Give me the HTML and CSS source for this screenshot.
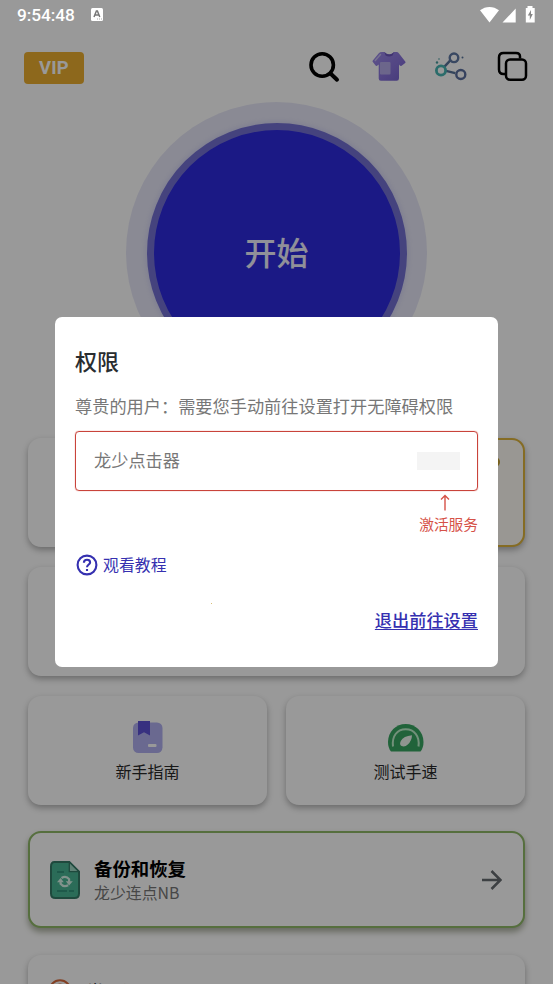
FILE: index.html
```html
<!DOCTYPE html>
<html lang="zh-CN">
<head>
<meta charset="UTF-8">
<title>龙少点击器</title>
<link rel="stylesheet" href="styles.css">
</head>
<body>
<header class="status">
  <span class="clock">9:54:48</span>
  <svg class="input-icon" width="12" height="13" viewBox="0 0 12 13"><rect width="12" height="13" rx="1.5" fill="#fff"/><path d="M3 9 5.4 3h1L8.8 9M4 7h4" fill="none" stroke="#777" stroke-width="1.5"/><path d="M6 11h5" stroke="#aaa" stroke-dasharray="1 1"/></svg>
  <svg class="signals" width="56" height="18" viewBox="0 0 56 18"><path d="M0 4.3C5.6-.2 13.4-.2 19 4.3L9.5 16.5ZM35.7 2.5V16.5H22.5Z" fill="#fff"/><path d="M47.5 0h5v2h2.2v14.4H45.8V2h1.7z" fill="#fff"/><path d="m51 4-3.2 5.5h2v4.5l3-6h-1.8z" fill="#888"/></svg>
</header>
<main class="app">
  <nav class="toolbar">
    <span class="vip">VIP</span>
    <div class="tools">
      <svg width="32" height="32" viewBox="0 0 32 32" fill="none" stroke="#000"><circle cx="14.2" cy="14" r="11.2" stroke-width="3.6"/><path d="m22.5 22.5 6.5 6.2" stroke-width="4" stroke-linecap="round"/></svg>
      <svg class="shirt" width="34" height="32" viewBox="0 0 34 32"><defs><linearGradient id="shirt" x1="0" y1="0" x2="1" y2="1"><stop stop-color="#9c8be8"/><stop offset=".55" stop-color="#8a75dc"/><stop offset="1" stop-color="#7461cc"/></linearGradient></defs><path d="M10 1h2.3q4.9 4.6 9.8 0h2.4q1.5 0 2.5 1.4l6.2 8q.8.9 0 1.7l-3.6 2.7q-1 .6-1.8-.2L27 13.5v13.8q0 2.5-2.4 2.5H8.9q-2.2 0-2.2-2.3V13.5l-1.6 1.2q-.8.6-1.5-.1L.8 11.1q-.7-.8 0-1.7l6-7.2Q7.8 1 10 1Z" fill="url(#shirt)"/><path d="M12.3 1q4.9 5 9.8 0l-1.5 3.4q-3.5 2.1-7 0Z" fill="#6b56bb"/><rect x="8" y="11" width="10.5" height="12.5" rx="1" fill="#b5abe8"/><path d="M3.3 9.4 8.5 3.5" stroke="#c6bdf0" stroke-width="1.5" stroke-linecap="round"/></svg>
      <svg width="34" height="32" viewBox="0 0 34 32" fill="none" stroke-width="2.4"><path d="m9.8 16.4 7.2-7.8M11 19.6l10.2 2.6" stroke="#58739a"/><circle cx="20" cy="6.8" r="4.3" stroke="#6079a4"/><circle cx="26.8" cy="23.5" r="4.5" stroke="#5b6f9e"/><circle cx="7" cy="19.5" r="4.6" stroke="#48b5b2" stroke-width="2.8"/><g stroke="none"><circle cx="3" cy="11.5" r="1.2" fill="#489b9d"/><circle cx="5" cy="8" r=".8" fill="#489b9d"/><circle cx="28.5" cy="6.5" r="1" fill="#56749b"/></g></svg>
      <svg width="32" height="32" viewBox="0 0 32 32" fill="none" stroke="#000" stroke-width="2.5"><path d="M8.5 23H6.5Q2 23 2 18.5V6.5Q2 2 6.5 2h12.5Q23 2 23 5.5v2"/><rect x="9" y="8.5" width="20" height="20.2" rx="4"/></svg>
    </div>
  </nav>
  <div class="start"><div class="start-core"><span>开始</span></div></div>
  <section class="cards">
    <div class="card"></div>
    <div class="card premium"></div>
    <div class="card wide"></div>
    <div class="card">
      <svg width="30" height="33" viewBox="0 0 30 33"><rect y="1.5" width="29.5" height="30.5" rx="5.5" fill="#b1b0f0"/><path d="M5 0h12v14.5l-6-3.2-6 3.2z" fill="#5d50d6"/><rect x="15" y="23" width="8.5" height="3" rx="1" fill="#fff"/></svg>
      <span>新手指南</span>
    </div>
    <div class="card">
      <svg width="36" height="28" viewBox="0 0 36 28"><path d="M3 27.5Q0 24 0 18C0 7.5 8 0 17.7 0s17.8 7.5 17.8 18q0 6-3 9.5z" fill="#38a661"/><path d="M5 22.5C3.7 12.3 9 5.2 17.7 5.2s14.2 7.1 12.8 17.3" fill="none" stroke="#bff0cc" stroke-width="2"/><path d="M24 11.2Q15.5 12 12.8 17q-1.8 3.5.8 5 3.4 1.3 6.2-1.6Q23.8 17 24 11.2Z" fill="#eef9f0"/></svg>
      <span>测试手速</span>
    </div>
  </section>
  <section class="row backup">
    <svg width="30" height="38" viewBox="0 0 30 38"><path d="M4.5 1h14.8l9.7 9.7v21.8q0 4.5-4.5 4.5h-19Q1 37 1 32.5v-27Q1 1 4.5 1Z" fill="#48b593" stroke="#347a67" stroke-width="2"/><path d="M19.3 1v9.7H29z" fill="#9dd8c3" stroke="#347a67" stroke-width="1.3"/><path d="M7 11h7M7 30h10m2 0h5" stroke="#32947c" stroke-width="2"/><g fill="none" stroke="#d7f5ea" stroke-width="2.2"><path d="M11.5 17q4.5-2.8 7.6 1.2v3M18.2 24.2q-4.6 2.4-7.6-1.4v-3"/></g><path d="M7 21.2l3.6-4.2 3.2 4.2zM15.8 20.2l3.3 4.2 3.7-4.2z" fill="#d7f5ea"/></svg>
    <div class="row-text"><strong>备份和恢复</strong><span>龙少连点NB</span></div>
    <svg class="next" width="20" height="20" viewBox="0 0 20 20"><path d="M0 10h18M9.5 1l9 9-9 9" fill="none" stroke="#666b70" stroke-width="2.5"/></svg>
  </section>
  <section class="row help">
    <svg width="24" height="24" viewBox="0 0 24 24" fill="none" stroke="#d96c3d" stroke-width="2"><circle cx="12" cy="12" r="10.7"/><path d="M8.5 9q0-3.5 3.5-3.5T15.5 9q0 2-3.5 4v2"/></svg>
    <span>常见问题</span>
  </section>
</main>
<div class="overlay">
  <section class="dialog">
    <h1>权限</h1>
    <p>尊贵的用户：需要您手动前往设置打开无障碍权限</p>
    <div class="service"><span>龙少点击器</span><i class="toggle"></i></div>
    <div class="hint">
      <svg width="10" height="17" viewBox="0 0 10 17"><path d="M5 16.5V1.5M1 5.5l4-4 4 4" fill="none" stroke="#d65248" stroke-width="1.4"/></svg>
      <span>激活服务</span>
    </div>
    <div class="tutorial">
      <svg width="22" height="22" viewBox="0 0 22 22" fill="none" stroke="#3530b0" stroke-width="2.1"><circle cx="11" cy="11" r="9.4"/><path d="M7.9 8.8q0-3.1 3.1-3.1t3.1 2.8c0 1.9-3.1 2.2-3.1 4.8M11 15v2"/></svg>
      <span>观看教程</span>
    </div>
    <div class="speck"></div>
    <a class="settings">退出前往设置</a>
  </section>
</div>
</body>
</html>
```
FILE: styles.css
```css
* { box-sizing: border-box; }
html, body { margin: 0; height: 984px; overflow: hidden; }
body { position: relative; background: #fff; font-family: Roboto, "Noto Sans CJK SC", sans-serif; }
svg { display: block; flex: none; }
.status { position: absolute; z-index: 3; top: 0; left: 0; width: 100%; height: 32px; padding-left: 17px; display: flex; align-items: flex-start; color: #fff; }
.clock { width: 74px; margin-top: 5px; font-size: 17.3px; line-height: 20px; font-weight: 500; letter-spacing: -.05px; }
.input-icon { margin-top: 8px; }
.signals { margin: 6px 17px 0 auto; }
.app { height: 984px; padding: 50px 28px 0; overflow: hidden; }
.toolbar { height: 32px; display: flex; align-items: center; justify-content: space-between; margin: 0 -4px; }
.vip { width: 60px; height: 32px; border-radius: 4px; background: #ecae2f; color: #fff; text-align: center; font-size: 18.4px; line-height: 32px; font-weight: 700; letter-spacing: .2px; margin-top: 3px; }
.tools { display: flex; gap: 30px; margin-top: 1px; }
.tools .shirt { margin: 0 -2px 0 2px; }
.tools svg:last-child { margin-left: -1px; }
.start { width: 301px; height: 301px; margin: 20px auto 0; border-radius: 50%; background: #e7e7f7; padding: 20.5px; }
.start-core { width: 260px; height: 260px; border: 7px solid #7471d2; border-radius: 50%; background: #2d2ade; box-shadow: 0 0 7px #c8c8f0; color: #f0f0ff; display: flex; align-items: center; justify-content: center; font-size: 32px; font-weight: 500; }
.start-core span { margin-bottom: 4px; }
.cards { display: grid; grid-template-columns: 1fr 1fr; grid-auto-rows: 109px; gap: 20px 19px; margin-top: 35px; }
.card { background: #fff; border-radius: 13px; box-shadow: 0 3px 6px rgba(0,0,0,.3); display: flex; flex-direction: column; align-items: center; padding-top: 25px; font-size: 16px; line-height: 24px; color: #292929; }
.card span { margin-top: auto; margin-bottom: 20px; }
.card:last-child { padding-top: 28px; }
.wide { grid-column: 1 / -1; }
.premium { border: 2px solid #deb43c; background: #fffcf5; position: relative; }
.premium::after { content: ""; position: absolute; right: 23px; top: 17px; width: 10px; height: 10px; border-radius: 50%; background: #c6a031; }
.row { background: #fff; border-radius: 13px; box-shadow: 0 3px 6px rgba(0,0,0,.3); display: flex; }
.backup { height: 97px; margin-top: 26px; border: 2px solid #8fb968; align-items: center; padding: 0 21px 0 20px; box-shadow: 0 4px 6px #abb09f; }
.row-text { margin: 3px 0 0 14px; display: flex; flex-direction: column; }
.row-text strong { font-size: 18.4px; line-height: 24px; font-weight: 700; color: #000; }
.row-text span { margin-top: -1px; font-family: "Noto Sans CJK SC", sans-serif; font-size: 15.9px; line-height: 23px; color: #777; }
.next { margin-left: auto; }
.help { height: 97px; margin-top: 27px; padding: 24px 20px; }
.help span { margin: 1px 0 0 14px; font-size: 18px; line-height: 26px; color: #333; }
.overlay { position: absolute; inset: 0; z-index: 2; background: rgba(0,0,0,.4); display: flex; justify-content: center; align-items: center; }
.dialog { width: 443px; height: 350px; background: #fff; border-radius: 7px; padding: 30px 20px 0; display: flex; flex-direction: column; }
.dialog h1 { margin: 0; font-size: 22px; line-height: 32px; font-weight: 500; color: #292d30; }
.dialog p { margin: 15px 0 0; font-size: 17.2px; line-height: 26px; color: #777; white-space: nowrap; }
.service { height: 60px; margin-top: 11px; border: 1.5px solid #c9433b; border-radius: 4px; box-shadow: 0 0 1px #d65248; display: flex; align-items: center; justify-content: space-between; padding: 0 17px 0 18px; font-size: 17.2px; color: #777; }
.service span { margin-bottom: 3px; }
.toggle { width: 43px; height: 18px; background: #f4f4f4; }
.hint { align-self: flex-end; display: flex; flex-direction: column; align-items: center; margin-top: 3px; color: #d65248; font-size: 14.7px; line-height: 21px; }
.hint svg { margin-right: 8px; }
.hint span { margin-top: 4px; }
.tutorial { display: flex; align-items: center; margin: 17px 0 0 1px; color: #3530b0; font-size: 15.9px; line-height: 24px; }
.tutorial svg { margin-bottom: 2px; }
.tutorial span { margin: 1px 0 0 5px; }
.speck { width: 1px; height: 1px; margin: 25px 0 0 136px; background: #d9be76; }
.settings { align-self: flex-end; margin-top: 4px; color: #3530b0; font-size: 17.2px; line-height: 26px; font-weight: 500; text-decoration: underline; text-decoration-thickness: 1px; text-underline-offset: 2px; }
```
